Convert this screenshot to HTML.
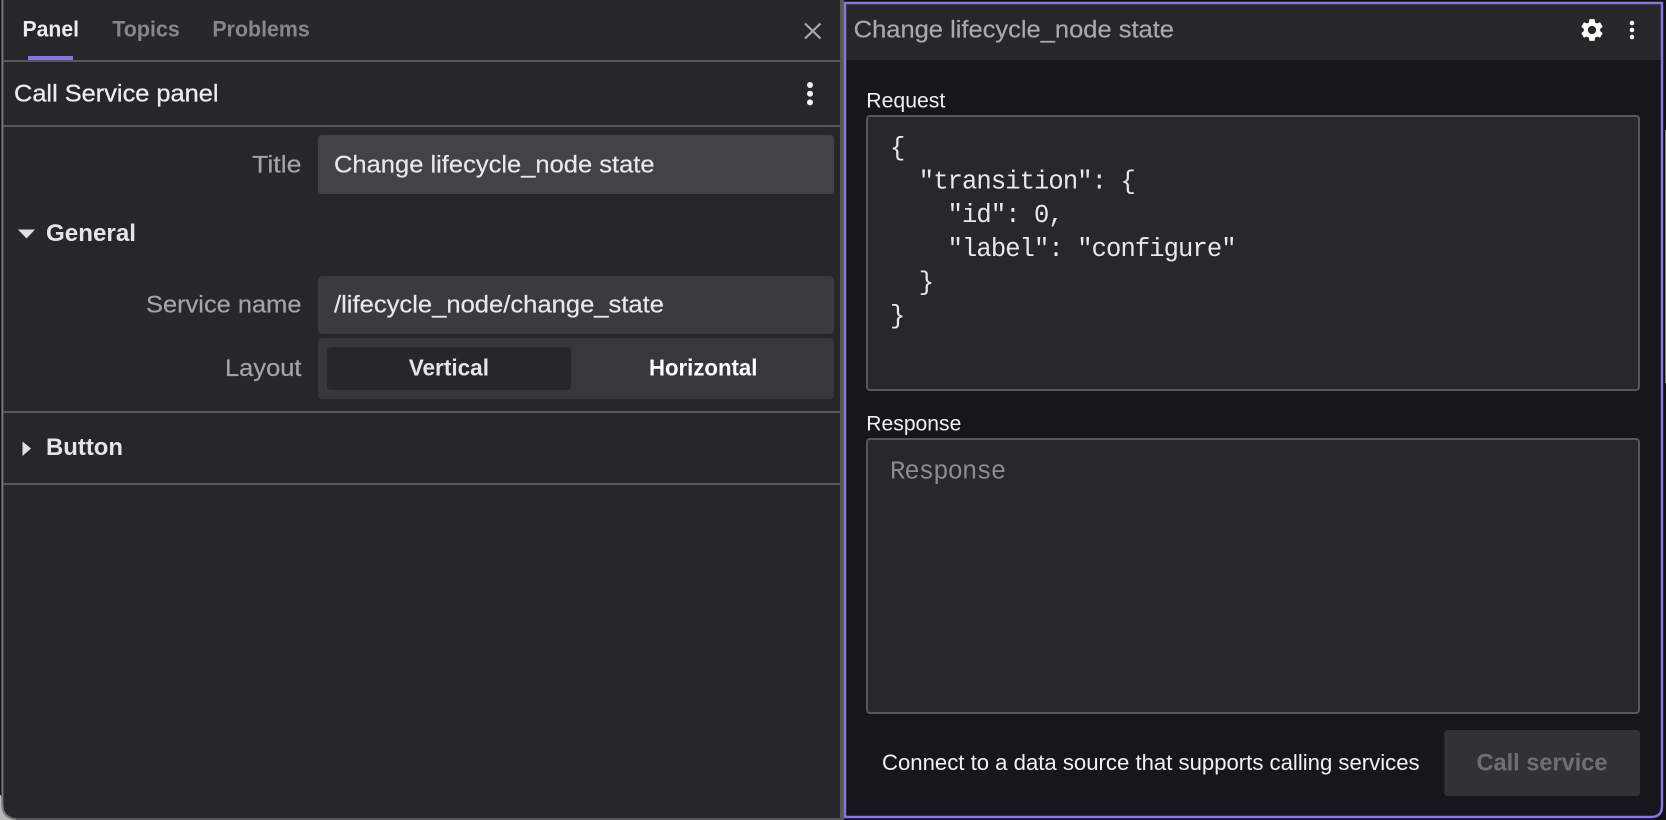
<!DOCTYPE html>
<html lang="en">
<head>
<meta charset="utf-8">
<title>Call Service panel</title>
<style>
html,body{margin:0;padding:0;background:#27272b;width:1666px;height:820px;overflow:hidden}
svg{display:block}
text{font-family:"Liberation Sans",sans-serif;white-space:pre}
.m{font-family:"Liberation Mono",monospace;font-size:25.5px;letter-spacing:-.9px;fill:#e8e8ea}
.med{stroke-width:.3px}
.lite{stroke-width:.2px}
</style>
</head>
<body>
<svg xmlns="http://www.w3.org/2000/svg" width="1666" height="820" viewBox="0 0 1666 820">
  <!-- outer window corner -->
  <rect width="1666" height="820" fill="#101012"/>
  <path d="M0 795V820H25Q3 818 1 795Z" fill="#b8b8b8"/>
  <path d="M2 0H840V820H16Q2 818 2 804Z" fill="#27272b"/>
  <path d="M2.4 0V804Q2.4 818 16 819" fill="none" stroke="#77777b" stroke-width="2"/>
  <rect x="840" y="0" width="4" height="820" fill="#58585c"/>
  <rect x="16" y="818" width="828" height="2" fill="#58585c"/>

  <!-- left tabs -->
  <text x="22.5" y="36.7" font-size="22" font-weight="700" fill="#ececee" textLength="56.5" lengthAdjust="spacingAndGlyphs">Panel</text>
  <text x="112.3" y="36.7" font-size="22" font-weight="700" fill="#86868b" textLength="67.5" lengthAdjust="spacingAndGlyphs">Topics</text>
  <text x="212.4" y="36.7" font-size="22" font-weight="700" fill="#86868b" textLength="97.4" lengthAdjust="spacingAndGlyphs">Problems</text>
  <rect x="28" y="56" width="45" height="4" fill="#8778db"/>
  <rect x="3" y="60" width="837" height="2" fill="#58585c"/>
  <path d="M805 23.5L820.5 38.5M820.5 23.5L805 38.5" stroke="#a8a8ad" stroke-width="2.2" fill="none"/>

  <!-- panel title row -->
  <text class="med" x="14" y="101.7" font-size="24.5" fill="#ececee" stroke="#ececee" textLength="204.5" lengthAdjust="spacingAndGlyphs">Call Service panel</text>
  <circle cx="810" cy="85" r="3" fill="#f4f4f6"/>
  <circle cx="810" cy="93.7" r="3" fill="#f4f4f6"/>
  <circle cx="810" cy="102.4" r="3" fill="#f4f4f6"/>
  <rect x="3" y="125" width="837" height="2" fill="#58585c"/>

  <!-- title field -->
  <text class="lite" x="252" y="172.7" font-size="24.5" fill="#a3a3a8" stroke="#a3a3a8" textLength="49.5" lengthAdjust="spacingAndGlyphs">Title</text>
  <rect x="318" y="135" width="516" height="59" rx="4" fill="#434347"/>
  <text class="lite" x="334" y="172.7" font-size="24.5" fill="#e8e8ea" stroke="#e8e8ea" textLength="320.6" lengthAdjust="spacingAndGlyphs">Change lifecycle_node state</text>

  <!-- general -->
  <path d="M18 229.5H35L26.5 238.5Z" fill="#e0e0e4"/>
  <text x="46" y="241" font-size="24" font-weight="700" fill="#e4e4e8" textLength="90" lengthAdjust="spacingAndGlyphs">General</text>

  <text class="lite" x="146" y="312.7" font-size="24.5" fill="#a3a3a8" stroke="#a3a3a8" textLength="155.5" lengthAdjust="spacingAndGlyphs">Service name</text>
  <rect x="318" y="276" width="516" height="58" rx="4" fill="#3a3a3f"/>
  <text class="lite" x="334" y="312.7" font-size="24.5" fill="#e8e8ea" stroke="#e8e8ea" textLength="330" lengthAdjust="spacingAndGlyphs">/lifecycle_node/change_state</text>

  <text class="lite" x="225" y="376" font-size="24.5" fill="#a3a3a8" stroke="#a3a3a8" textLength="76.5" lengthAdjust="spacingAndGlyphs">Layout</text>
  <rect x="318" y="338" width="516" height="61" rx="4" fill="#38383c"/>
  <rect x="327" y="347" width="244" height="43" rx="4" fill="#27272b"/>
  <text x="408.7" y="375.3" font-size="23" font-weight="700" fill="#e4e4e8" textLength="80.3" lengthAdjust="spacingAndGlyphs">Vertical</text>
  <text x="649" y="375.3" font-size="23" font-weight="700" fill="#ffffff" textLength="108.4" lengthAdjust="spacingAndGlyphs">Horizontal</text>

  <rect x="3" y="411" width="837" height="2" fill="#58585c"/>
  <path d="M22.5 441.5L31 448.5L22.5 456Z" fill="#e0e0e4"/>
  <text x="46" y="455" font-size="24" font-weight="700" fill="#e4e4e8" textLength="77" lengthAdjust="spacingAndGlyphs">Button</text>
  <rect x="3" y="483" width="837" height="2" fill="#58585c"/>

  <!-- right panel -->
  <path d="M845 3H1662V806Q1662 817 1651 817H845Z" fill="#16161c"/>
  <rect x="845" y="3" width="817" height="57" fill="#27272b"/>
  <path d="M845 3H1662V806Q1662 817 1651 817H845Z" fill="none" stroke="#8778db" stroke-width="2.4"/>
  <rect x="1665" y="130" width="1" height="253" fill="#8a8a8a"/>

  <text class="lite" x="853.7" y="37.3" font-size="24" fill="#a8a8ad" stroke="#a8a8ad" textLength="320.3" lengthAdjust="spacingAndGlyphs">Change lifecycle_node state</text>
  <path transform="translate(1578.4 16.4) scale(1.133)" fill="#ffffff" d="M19.14 12.94c.04-.3.06-.61.06-.94 0-.32-.02-.64-.07-.94l2.03-1.58c.18-.14.23-.41.12-.61l-1.92-3.32c-.12-.22-.37-.29-.59-.22l-2.39.96c-.5-.38-1.03-.7-1.62-.94l-.36-2.54c-.04-.24-.24-.41-.48-.41h-3.84c-.24 0-.43.17-.47.41l-.36 2.54c-.59.24-1.13.57-1.62.94l-2.39-.96c-.22-.08-.47 0-.59.22L2.74 8.87c-.12.21-.08.47.12.61l2.03 1.58c-.05.3-.09.63-.09.94s.02.64.07.94l-2.03 1.58c-.18.14-.23.41-.12.61l1.92 3.32c.12.22.37.29.59.22l2.39-.96c.5.38 1.03.7 1.62.94l.36 2.54c.05.24.24.41.48.41h3.84c.24 0 .44-.17.47-.41l.36-2.54c.59-.24 1.13-.56 1.62-.94l2.39.96c.22.08.47 0 .59-.22l1.92-3.32c.12-.22.07-.47-.12-.61l-2.01-1.58zM12 15.6c-1.98 0-3.6-1.62-3.6-3.6s1.62-3.6 3.6-3.6 3.6 1.62 3.6 3.6-1.62 3.6-3.6 3.6z"/>
  <circle cx="1632" cy="23" r="2.3" fill="#ffffff"/>
  <circle cx="1632" cy="30" r="2.3" fill="#ffffff"/>
  <circle cx="1632" cy="37" r="2.3" fill="#ffffff"/>

  <!-- request -->
  <text x="866.3" y="107.3" font-size="21" fill="#f0f0f2" textLength="79" lengthAdjust="spacingAndGlyphs">Request</text>
  <rect x="867" y="116" width="772" height="274" rx="3" fill="#28282c" stroke="#57575b" stroke-width="2"/>
  <text class="m" x="890" y="155">{</text>
  <text class="m" x="890" y="188.5">  "transition": {</text>
  <text class="m" x="890" y="222.2">    "id": 0,</text>
  <text class="m" x="890" y="256">    "label": "configure"</text>
  <text class="m" x="890" y="289.5">  }</text>
  <text class="m" x="890" y="323.2">}</text>

  <!-- response -->
  <text x="866.3" y="430.7" font-size="21" fill="#f0f0f2" textLength="95" lengthAdjust="spacingAndGlyphs">Response</text>
  <rect x="867" y="439" width="772" height="274" rx="3" fill="#28282c" stroke="#57575b" stroke-width="2"/>
  <text class="m" x="890" y="478.7" style="fill:#8b8b90">Response</text>

  <!-- footer -->
  <text x="882" y="770" font-size="22" fill="#f2f2f4" textLength="537.6" lengthAdjust="spacingAndGlyphs">Connect to a data source that supports calling services</text>
  <rect x="1444.3" y="730" width="195.7" height="66" rx="3" fill="#313136"/>
  <text x="1476.5" y="770.7" font-size="24" font-weight="700" fill="#6e6e73" textLength="131" lengthAdjust="spacingAndGlyphs">Call service</text>
</svg>
</body>
</html>
